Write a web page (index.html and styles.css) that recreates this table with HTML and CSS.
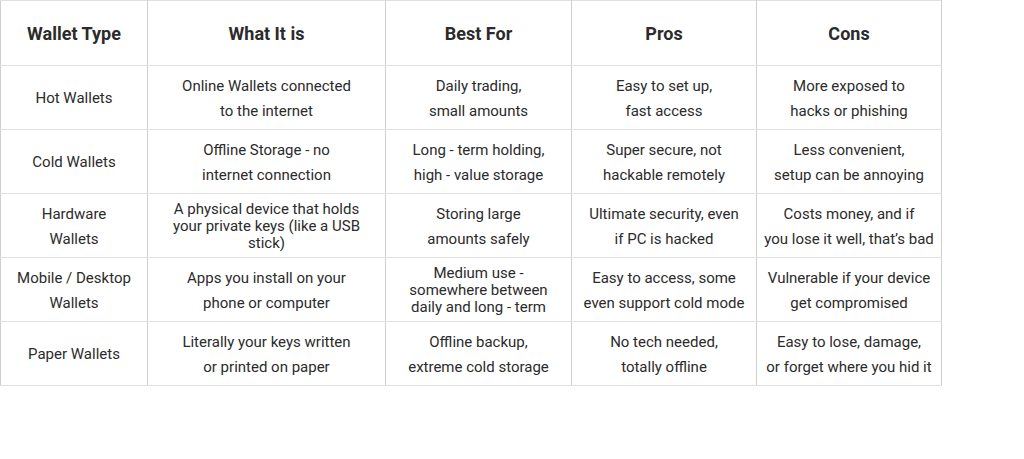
FILE: index.html
```html
<!DOCTYPE html>
<html lang="en">
<head>
<meta charset="utf-8">
<title>Wallet Types</title>
<link rel="stylesheet" href="styles.css">
</head>
<body>
<table class="wallets">
  <colgroup>
    <col class="c1"><col class="c2"><col class="c3"><col class="c4"><col class="c5">
  </colgroup>
  <thead>
    <tr>
      <th>Wallet Type</th>
      <th>What It is</th>
      <th>Best For</th>
      <th>Pros</th>
      <th>Cons</th>
    </tr>
  </thead>
  <tbody>
    <tr>
      <td>Hot Wallets</td>
      <td>Online Wallets connected<br>to the internet</td>
      <td>Daily trading,<br>small amounts</td>
      <td>Easy to set up,<br>fast access</td>
      <td>More exposed to<br>hacks or phishing</td>
    </tr>
    <tr>
      <td>Cold Wallets</td>
      <td>Offline Storage - no<br>internet connection</td>
      <td>Long - term holding,<br>high - value storage</td>
      <td>Super secure, not<br>hackable remotely</td>
      <td>Less convenient,<br>setup can be annoying</td>
    </tr>
    <tr>
      <td>Hardware<br>Wallets</td>
      <td class="tight">A physical device that holds<br>your private keys (like a USB<br>stick)</td>
      <td>Storing large<br>amounts safely</td>
      <td>Ultimate security, even<br>if PC is hacked</td>
      <td>Costs money, and if<br>you lose it well, that’s bad</td>
    </tr>
    <tr>
      <td>Mobile / Desktop<br>Wallets</td>
      <td>Apps you install on your<br>phone or computer</td>
      <td class="tight">Medium use -<br>somewhere between<br>daily and long - term</td>
      <td>Easy to access, some<br>even support cold mode</td>
      <td>Vulnerable if your device<br>get compromised</td>
    </tr>
    <tr>
      <td>Paper Wallets</td>
      <td>Literally your keys written<br>or printed on paper</td>
      <td>Offline backup,<br>extreme cold storage</td>
      <td>No tech needed,<br>totally offline</td>
      <td>Easy to lose, damage,<br>or forget where you hid it</td>
    </tr>
  </tbody>
</table>
</body>
</html>
```
FILE: styles.css
```css
html, body {
  margin: 0;
  padding: 0;
  background: #ffffff;
}

body {
  font-family: Roboto, "Liberation Sans", sans-serif;
  color: #2b2b2b;
}

.wallets {
  border-collapse: collapse;
  table-layout: fixed;
  width: 941px;
}

.c1 { width: 147px; }
.c2 { width: 238px; }
.c3 { width: 186px; }
.c4 { width: 185px; }
.c5 { width: 185px; }

.wallets th,
.wallets td {
  box-sizing: border-box;
  border-top: 1px solid #e0e0e0;
  border-bottom: 1px solid #e0e0e0;
  border-left: 1px solid #cfcfcf;
  border-right: 1px solid #cfcfcf;
  text-align: center;
  vertical-align: middle;
  padding: 0 2px;
}

.wallets th {
  height: 65px;
  font-size: 18px;
  font-weight: 700;
  color: #2b2b2b;
}

.wallets td {
  height: 64px;
  padding-top: 2px;
  font-size: 15px;
  line-height: 25px;
  font-weight: 400;
  color: #2b2b2b;
}

.wallets td.tight {
  line-height: 17px;
}
```
